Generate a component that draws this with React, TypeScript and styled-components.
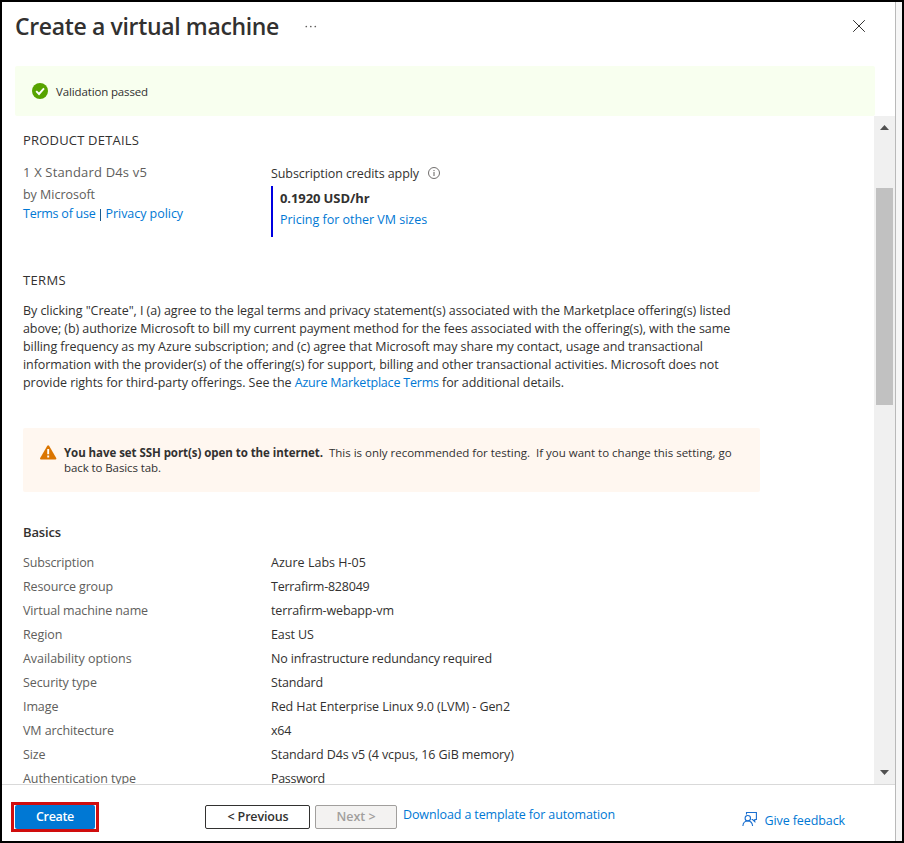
import React from "react";
import styled, { createGlobalStyle } from "styled-components";

const GlobalStyle = createGlobalStyle`
  * { box-sizing: border-box; }
  body { margin: 0; background: #fff; }
  button { font: inherit; }
`;

const Frame = styled.div`
  display: flex;
  width: 904px;
  height: 843px;
  overflow: hidden;
  border: 2px solid #000;
  background: #fff;
  color: #323130;
  font-family: "Open Sans", "Noto Sans", sans-serif;
  font-size: 12.5px;
  line-height: 18px;
`;

const Blade = styled.main`
  display: flex;
  flex-direction: column;
  width: 893px;
`;

const OuterEdge = styled.div`
  flex: 1;
  border-left: 1px solid #b9b9b9;
  background: #f6f6f6;
`;

const Text = styled.span<{ $ls?: number }>`
  letter-spacing: ${(p) => p.$ls ?? 0}px;
  white-space: pre;
`;

const Link = styled.a<{ $ls?: number }>`
  color: #0078d4;
  letter-spacing: ${(p) => p.$ls ?? 0}px;
  text-decoration: none;
  white-space: pre;
`;

const Header = styled.header`
  display: flex;
  height: 64px;
  padding: 8px 29px 0 13px;
`;

const Title = styled.h1`
  margin: 0;
  font-size: 23px;
  font-weight: 600;
  line-height: 32px;
  letter-spacing: -0.35px;
  white-space: nowrap;
`;

const MoreIcon = styled.svg`
  margin: 14px 0 0 26px;
`;

const CloseIcon = styled.svg`
  margin: 9px 0 0 auto;
`;

const SuccessBanner = styled.div`
  display: flex;
  align-items: center;
  gap: 8px;
  width: 860px;
  height: 50px;
  margin-left: 13px;
  padding-left: 17px;
  border-radius: 2px;
  background: #f8ffef;
  font-size: 11.5px;
`;

const BannerText = styled(Text)`
  padding-top: 2px;
`;

const ScrollArea = styled.div`
  display: flex;
  height: 668px;
  overflow: hidden;
`;

const Content = styled.div`
  flex: 1;
  padding: 15px 0 0 21px;
  overflow: hidden;
`;

const Scrollbar = styled.div`
  display: flex;
  flex-direction: column;
  align-items: center;
  justify-content: space-between;
  width: 21px;
  padding: 9px 0;
  background: #f0f0f0;
`;

const Thumb = styled.div`
  width: 17px;
  height: 217px;
  margin: 58px 0 auto;
  background: #c1c1c1;
`;

const SectionHeading = styled.h2<{ $ls: number; $bold?: boolean }>`
  margin: 0;
  font-size: 13px;
  font-weight: ${(p) => (p.$bold ? 600 : 400)};
  letter-spacing: ${(p) => p.$ls}px;
  line-height: 18px;
`;

const ProductRow = styled.div`
  display: grid;
  grid-template-columns: 248px 1fr;
  height: 122px;
  padding-top: 14px;
`;

const ProductInfo = styled.div`
  display: flex;
  flex-direction: column;
  color: #605e5c;
`;

const ProductName = styled(Text)`
  height: 23px;
  font-size: 13px;
`;

const Publisher = styled(Text)`
  height: 19px;
`;

const LegalLinks = styled.div`
  display: flex;
  gap: 4.5px;
`;

const Divider = styled.span`
  width: 1px;
  height: 12px;
  margin-top: 4px;
  background: #1b5a8c;
`;

const Credits = styled.div`
  display: flex;
  align-items: center;
  gap: 9px;
  height: 20px;
  margin-top: 1px;
`;

const InfoIcon = styled.svg`
  margin-top: -2px;
`;

const PriceBox = styled.div`
  display: flex;
  flex-direction: column;
  height: 51px;
  margin-top: 2px;
  padding: 3px 0 0 7px;
  border-left: 2px solid #0000e0;
`;

const Price = styled(Text)`
  height: 22px;
  font-size: 13px;
  font-weight: 700;
`;

const Terms = styled.p`
  display: flex;
  flex-direction: column;
  margin: 13px 0 0;
`;

const Warning = styled.div`
  display: flex;
  gap: 7px;
  width: 737px;
  height: 64px;
  margin-top: 36px;
  padding: 17px 0 0 17px;
  border-radius: 2px;
  background: #fff7f0;
  font-size: 11.5px;
  line-height: 15px;
`;

const WarningText = styled.div`
  display: flex;
  flex-direction: column;
`;

const Strong = styled(Text)`
  font-weight: 700;
`;

const Basics = styled.section`
  margin-top: 31px;
`;

const Properties = styled.dl`
  margin: 10px 0 0;
`;

const Property = styled.div`
  display: grid;
  grid-template-columns: 248px 1fr;
  height: 24px;
  line-height: 24px;
`;

const Term = styled.dt<{ $ls: number }>`
  color: #605e5c;
  letter-spacing: ${(p) => p.$ls}px;
`;

const Value = styled.dd<{ $ls: number }>`
  margin: 0;
  letter-spacing: ${(p) => p.$ls}px;
`;

const Footer = styled.footer`
  display: flex;
  align-items: flex-start;
  height: 57px;
  padding: 17px 50px 0 9px;
  border-top: 1px solid #d9d9d9;
`;

const Highlight = styled.div`
  width: 88px;
  height: 30px;
  padding: 0 1px;
  border: 3px solid #d00d0d;
`;

const Button = styled.button<{ $kind: "primary" | "default" | "disabled" }>`
  display: flex;
  align-items: center;
  justify-content: center;
  height: 24px;
  padding: 0 0 1px;
  border-radius: 2px;
  font-weight: 600;
  white-space: pre;
  ${(p) =>
    p.$kind === "primary"
      ? "width: 80px; border: 0; background: #0078d4; color: #fff; letter-spacing: -0.32px;"
      : p.$kind === "default"
        ? "width: 105px; padding-left: 1px; border: 1px solid #323130; background: #fff; color: #323130; letter-spacing: -0.15px;"
        : "width: 82px; border: 1px solid #a19f9d; background: #f3f2f1; color: #a19f9d; letter-spacing: -0.03px;"}
`;

const Pager = styled.div`
  display: flex;
  gap: 5px;
  margin: 3px 0 0 106px;
`;

const TemplateLink = styled(Link)`
  margin: 4px 0 0 6px;
`;

const Feedback = styled.a`
  display: flex;
  gap: 8px;
  margin: 10px 0 0 auto;
  color: #0078d4;
`;

const FeedbackIcon = styled.svg`
  margin: -1px 0 0 -1px;
`;

const properties: [string, number, string, number][] = [
  ["Subscription", -0.15, "Azure Labs H-05", 0.02],
  ["Resource group", -0.14, "Terrafirm-828049", -0.22],
  ["Virtual machine name", -0.135, "terrafirm-webapp-vm", -0.12],
  ["Region", -0.1, "East US", -0.1],
  ["Availability options", -0.04, "No infrastructure redundancy required", -0.17],
  ["Security type", -0.1, "Standard", -0.15],
  ["Image", -0.1, "Red Hat Enterprise Linux 9.0 (LVM) - Gen2", -0.085],
  ["VM architecture", -0.1, "x64", -0.2],
  ["Size", -0.1, "Standard D4s v5 (4 vcpus, 16 GiB memory)", -0.09],
  ["Authentication type", -0.07, "Password", -0.3],
];

export default function App() {
  return (
    <>
      <GlobalStyle />
      <Frame>
        <Blade>
          <Header>
            <Title>Create a virtual machine</Title>
            <MoreIcon width="12" height="4" fill="#605e5c">
              <circle cx="1.3" cy="2.5" r="0.85" />
              <circle cx="5.8" cy="2.5" r="0.85" />
              <circle cx="10.3" cy="2.5" r="0.85" />
            </MoreIcon>
            <CloseIcon width="14" height="14" stroke="#323130" strokeWidth="1">
              <path d="M1.2 1.2 12.8 12.8M12.8 1.2 1.2 12.8" />
            </CloseIcon>
          </Header>
          <SuccessBanner>
            <svg width="16" height="16" viewBox="0 0 16 16">
              <circle cx="8" cy="8" r="8" fill="#57a300" />
              <path d="M4.2 8.2 7 11 12 5.4" fill="none" stroke="#fff" strokeWidth="1.9" />
            </svg>
            <BannerText $ls={-0.135}>Validation passed</BannerText>
          </SuccessBanner>
          <ScrollArea>
            <Content>
              <SectionHeading $ls={0.19}>PRODUCT DETAILS</SectionHeading>
              <ProductRow>
                <ProductInfo>
                  <ProductName $ls={0.166}>1 X Standard D4s v5</ProductName>
                  <Publisher $ls={-0.025}>by Microsoft</Publisher>
                  <LegalLinks>
                    <Link $ls={-0.24}>Terms of use</Link>
                    <Divider />
                    <Link $ls={-0.05}>Privacy policy</Link>
                  </LegalLinks>
                </ProductInfo>
                <div>
                  <Credits>
                    <Text $ls={-0.09}>Subscription credits apply</Text>
                    <InfoIcon width="12" height="12" viewBox="0 0 12 12" fill="none" stroke="#605e5c">
                      <circle cx="6" cy="6" r="5.5" strokeWidth="0.9" />
                      <path d="M6 5V9M6 3V4.1" />
                    </InfoIcon>
                  </Credits>
                  <PriceBox>
                    <Price $ls={-0.09}>0.1920 USD/hr</Price>
                    <Link $ls={-0.02}>Pricing for other VM sizes</Link>
                  </PriceBox>
                </div>
              </ProductRow>
              <SectionHeading $ls={0.35}>TERMS</SectionHeading>
              <Terms>
                <Text $ls={-0.055}>By clicking "Create", I (a) agree to the legal terms and privacy statement(s) associated with the Marketplace offering(s) listed</Text>
                <Text $ls={-0.08}>above; (b) authorize Microsoft to bill my current payment method for the fees associated with the offering(s), with the same</Text>
                <Text $ls={-0.08}>billing frequency as my Azure subscription; and (c) agree that Microsoft may share my contact, usage and transactional</Text>
                <Text $ls={-0.075}>information with the provider(s) of the offering(s) for support, billing and other transactional activities. Microsoft does not</Text>
                <Text $ls={-0.055}>
                  provide rights for third-party offerings. See the <Link $ls={-0.2}>Azure Marketplace Terms</Link> for additional details.
                </Text>
              </Terms>
              <Warning>
                <svg width="17" height="15" viewBox="0 0 17 15">
                  <path d="M7.3.8Q8.2-.5 9.1.8L16.2 13Q16.8 14.5 15.4 14.6H1Q-.4 14.5.2 13Z" fill="#db7500" />
                  <path d="M8.2 4V9.2M8.2 10.6V12.5" stroke="#fff" strokeWidth="1.9" />
                </svg>
                <WarningText>
                  <span>
                    <Strong $ls={-0.057}>You have set SSH port(s) open to the internet.</Strong>
                    <Text $ls={-0.01}>{"  This is only recommended for testing.  If you want to change this setting, go"}</Text>
                  </span>
                  <Text $ls={-0.09}>back to Basics tab.</Text>
                </WarningText>
              </Warning>
              <Basics>
                <SectionHeading $bold $ls={-0.14}>Basics</SectionHeading>
                <Properties>
                  {properties.map(([term, termLs, value, valueLs]) => (
                    <Property key={term}>
                      <Term $ls={termLs}>{term}</Term>
                      <Value $ls={valueLs}>{value}</Value>
                    </Property>
                  ))}
                </Properties>
              </Basics>
            </Content>
            <Scrollbar>
              <svg width="9" height="5" fill="#505050"><path d="M0 5 4.5 0 9 5Z" /></svg>
              <Thumb />
              <svg width="9" height="5" fill="#505050"><path d="M0 0 4.5 5 9 0Z" /></svg>
            </Scrollbar>
          </ScrollArea>
          <Footer>
            <Highlight>
              <Button $kind="primary">Create</Button>
            </Highlight>
            <Pager>
              <Button $kind="default">{"< Previous"}</Button>
              <Button $kind="disabled" disabled>{"Next >"}</Button>
            </Pager>
            <TemplateLink $ls={-0.12}>Download a template for automation</TemplateLink>
            <Feedback>
              <FeedbackIcon width="15" height="16" viewBox="0 0 15 16" fill="none" stroke="#1a6fd0" strokeWidth="1.1">
                <path d="M4.5 3.6V1.5H14.4V8.5H12.8V10.6L10.6 8.5H9.6" />
                <circle cx="5.8" cy="7.2" r="2.7" />
                <path d="M.9 15C1.1 11.8 3.2 10 5.8 10S10.3 11.8 10.6 15" />
              </FeedbackIcon>
              <Text $ls={-0.1}>Give feedback</Text>
            </Feedback>
          </Footer>
        </Blade>
        <OuterEdge />
      </Frame>
    </>
  );
}
